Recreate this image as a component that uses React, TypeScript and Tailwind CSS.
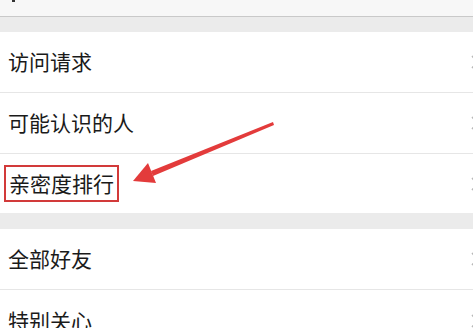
import React from 'react'

function Chevron() {
  return (
    <svg width="8" height="14" viewBox="0 0 8 14" className="shrink-0 mr-[-6px]">
      <path d="M1 1 L7 7 L1 13" fill="none" stroke="#b8b8b8" strokeWidth="1.6" />
    </svg>
  )
}

function Row({ label, border = true, h = 'h-[61px]', boxed = false }: { label: string; border?: boolean; h?: string; boxed?: boolean }) {
  return (
    <div className="bg-white">
      <div className={`${h} flex items-center justify-between pl-2 ${border ? 'border-b border-[#e6e6e6]' : ''}`}>
        {boxed ? (
          <span className="-ml-1 px-[3px] h-[37px] flex items-center border-2 border-[#d23a3a] text-[21px] text-[#1a1a1a]">{label}</span>
        ) : (
          <span className="text-[21px] text-[#1a1a1a]">{label}</span>
        )}
        <Chevron />
      </div>
    </div>
  )
}

export default function App() {
  return (
    <div
      className="relative w-[473px] h-[328px] overflow-hidden bg-[#ebebeb]"
      style={{ fontFamily: '"Noto Sans CJK SC", "Noto Sans", sans-serif' }}
    >
      <div className="h-[17px] bg-[#f7f7f7] border-b border-[#c9c9c9] relative">
        <span className="absolute left-[12px] top-0 w-[3px] h-[2px] bg-[#333]" />
      </div>
      <div className="h-[15px]" />
      <Row label="访问请求" />
      <Row label="可能认识的人" />
      <Row label="亲密度排行" border={false} h="h-[59px]" boxed />
      <div className="h-[16px]" />
      <Row label="全部好友" />
      <Row label="特别关心" border={false} />

      <svg className="absolute left-0 top-0" width="473" height="328" viewBox="0 0 473 328">
        <path d="M273 122 L151 171 L153 176 L274 125 Z" fill="#e33b3b" />
        <path d="M133 181 L148 163 L156 183 Z" fill="#e33b3b" />
      </svg>
    </div>
  )
}
